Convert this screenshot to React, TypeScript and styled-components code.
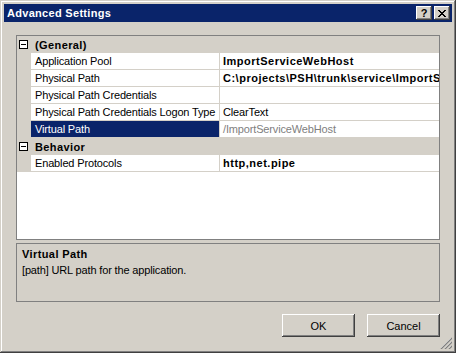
import styled, { createGlobalStyle } from "styled-components";

const GlobalStyle = createGlobalStyle`
  html, body {
    margin: 0;
    padding: 0;
    background: #d4d0c8;
  }
  * {
    box-sizing: border-box;
  }
`;

const Window = styled.div`
  width: 456px;
  height: 353px;
  padding: 4px;
  background: #d4d0c8;
  display: flex;
  flex-direction: column;
  position: relative;
  font-family: "Liberation Sans", Arial, sans-serif;
  font-size: 11px;
  letter-spacing: -0.15px;
  color: #000;
  box-shadow: inset -1px -1px #404040, inset 1px 1px #d4d0c8,
    inset -2px -2px #808080, inset 2px 2px #ffffff;
`;

const TitleBar = styled.div`
  height: 18px;
  margin-bottom: 1px;
  background: #0a246a;
  display: flex;
  align-items: center;
  padding: 0 2px 0 2px;
  color: #fff;
  font-weight: bold;
  font-size: 11px;
  letter-spacing: 0.3px;
`;

const Title = styled.div`
  flex: 1;
  padding-left: 1px;
`;

const CaptionButton = styled.button`
  width: 16px;
  height: 14px;
  padding: 0;
  margin-left: 2px;
  border: none;
  background: #d4d0c8;
  display: flex;
  align-items: center;
  justify-content: center;
  font-family: "Liberation Sans", Arial, sans-serif;
  font-weight: bold;
  font-size: 11px;
  color: #000;
  box-shadow: inset -1px -1px #404040, inset 1px 1px #ffffff,
    inset -2px -2px #808080, inset 2px 2px #d4d0c8;
`;

const Client = styled.div`
  flex: 1;
  display: flex;
  flex-direction: column;
  padding: 12px;
`;

const PropertyGrid = styled.div`
  height: 205px;
  border: 1px solid #808080;
  background: #fff;
  overflow: hidden;
`;

const CategoryRow = styled.div`
  height: 17px;
  display: flex;
  align-items: center;
  background: #d4d0c8;
  font-weight: bold;
  letter-spacing: 0.4px;
`;

const Gutter = styled.div`
  width: 14px;
  height: 100%;
  display: flex;
  align-items: center;
  padding-left: 2px;
  background: #d4d0c8;
  flex-shrink: 0;
`;

const CategoryName = styled.div`
  padding-left: 4px;
`;

const ItemRow = styled.div`
  height: 17px;
  display: flex;
  white-space: nowrap;
`;

const LabelCell = styled.div<{ $selected?: boolean }>`
  width: 189px;
  flex-shrink: 0;
  line-height: 16px;
  padding-left: 4px;
  border-right: 1px solid #d4d0c8;
  border-bottom: 1px solid #d4d0c8;
  background: ${(p) => (p.$selected ? "#0a246a" : "#fff")};
  color: ${(p) => (p.$selected ? "#fff" : "#000")};
  overflow: hidden;
`;

const ValueCell = styled.div<{ $bold?: boolean; $readOnly?: boolean }>`
  flex: 1;
  min-width: 0;
  line-height: 16px;
  padding-left: 3px;
  border-bottom: 1px solid #d4d0c8;
  font-weight: ${(p) => (p.$bold ? "bold" : "normal")};
  letter-spacing: ${(p) => (p.$bold ? "0.5px" : "-0.15px")};
  color: ${(p) => (p.$readOnly ? "#808080" : "#000")};
  overflow: hidden;
  text-overflow: clip;
`;

const Description = styled.div`
  height: 59px;
  margin-top: 3px;
  border: 1px solid #808080;
  padding: 2px 5px;
  line-height: 16px;
`;

const DescTitle = styled.div`
  font-weight: bold;
  letter-spacing: 0.4px;
`;

const ButtonRow = styled.div`
  margin-top: 12px;
  display: flex;
  justify-content: flex-end;
  gap: 12px;
`;

const PushButton = styled.button`
  width: 73px;
  height: 23px;
  padding: 0;
  border: none;
  background: #d4d0c8;
  font-family: "Liberation Sans", Arial, sans-serif;
  font-size: 11px;
  color: #000;
  box-shadow: inset -1px -1px #404040, inset 1px 1px #ffffff,
    inset -2px -2px #808080, inset 2px 2px #d4d0c8;
`;

const Grip = styled.svg`
  position: absolute;
  right: 4px;
  bottom: 4px;
`;

type Item = {
  label: string;
  value: string;
  bold?: boolean;
  selected?: boolean;
  readOnly?: boolean;
};

const groups: { name: string; items: Item[] }[] = [
  {
    name: "(General)",
    items: [
      { label: "Application Pool", value: "ImportServiceWebHost", bold: true },
      {
        label: "Physical Path",
        value: "C:\\projects\\PSH\\trunk\\service\\ImportServiceWebHost",
        bold: true,
      },
      { label: "Physical Path Credentials", value: "" },
      { label: "Physical Path Credentials Logon Type", value: "ClearText" },
      {
        label: "Virtual Path",
        value: "/ImportServiceWebHost",
        selected: true,
        readOnly: true,
      },
    ],
  },
  {
    name: "Behavior",
    items: [{ label: "Enabled Protocols", value: "http,net.pipe", bold: true }],
  },
];

function Collapse() {
  return (
    <svg width="9" height="9" viewBox="0 0 9 9" shapeRendering="crispEdges">
      <rect x="0.5" y="0.5" width="8" height="8" fill="#fff" stroke="#000" />
      <line x1="2" y1="4.5" x2="7" y2="4.5" stroke="#000" />
    </svg>
  );
}

export default function App() {
  return (
    <>
      <GlobalStyle />
      <Window>
        <TitleBar>
          <Title>Advanced Settings</Title>
          <CaptionButton>?</CaptionButton>
          <CaptionButton>
            <svg width="8" height="7" viewBox="0 0 8 7" shapeRendering="crispEdges">
              <path
                d="M0 0h2v1h-2zM6 0h2v1h-2zM1 1h2v1h-2zM5 1h2v1h-2zM2 2h4v1h-4zM3 3h2v1h-2zM2 4h4v1h-4zM1 5h2v1h-2zM5 5h2v1h-2zM0 6h2v1h-2zM6 6h2v1h-2z"
                fill="#000"
              />
            </svg>
          </CaptionButton>
        </TitleBar>
        <Client>
          <PropertyGrid>
            {groups.map((g) => (
              <div key={g.name}>
                <CategoryRow>
                  <Gutter>
                    <Collapse />
                  </Gutter>
                  <CategoryName>{g.name}</CategoryName>
                </CategoryRow>
                {g.items.map((it) => (
                  <ItemRow key={it.label}>
                    <Gutter />
                    <LabelCell $selected={it.selected}>{it.label}</LabelCell>
                    <ValueCell $bold={it.bold} $readOnly={it.readOnly}>
                      {it.value}
                    </ValueCell>
                  </ItemRow>
                ))}
              </div>
            ))}
          </PropertyGrid>
          <Description>
            <DescTitle>Virtual Path</DescTitle>
            <div>[path] URL path for the application.</div>
          </Description>
          <ButtonRow>
            <PushButton>OK</PushButton>
            <PushButton>Cancel</PushButton>
          </ButtonRow>
        </Client>
        <Grip width="12" height="12" viewBox="0 0 12 12">
          <path d="M11 1L1 11M11 5L5 11M11 9L9 11" stroke="#fff" />
          <path d="M12 1L1 12M12 5L5 12M12 9L9 12" stroke="#808080" strokeWidth="1.3" />
        </Grip>
      </Window>
    </>
  );
}
